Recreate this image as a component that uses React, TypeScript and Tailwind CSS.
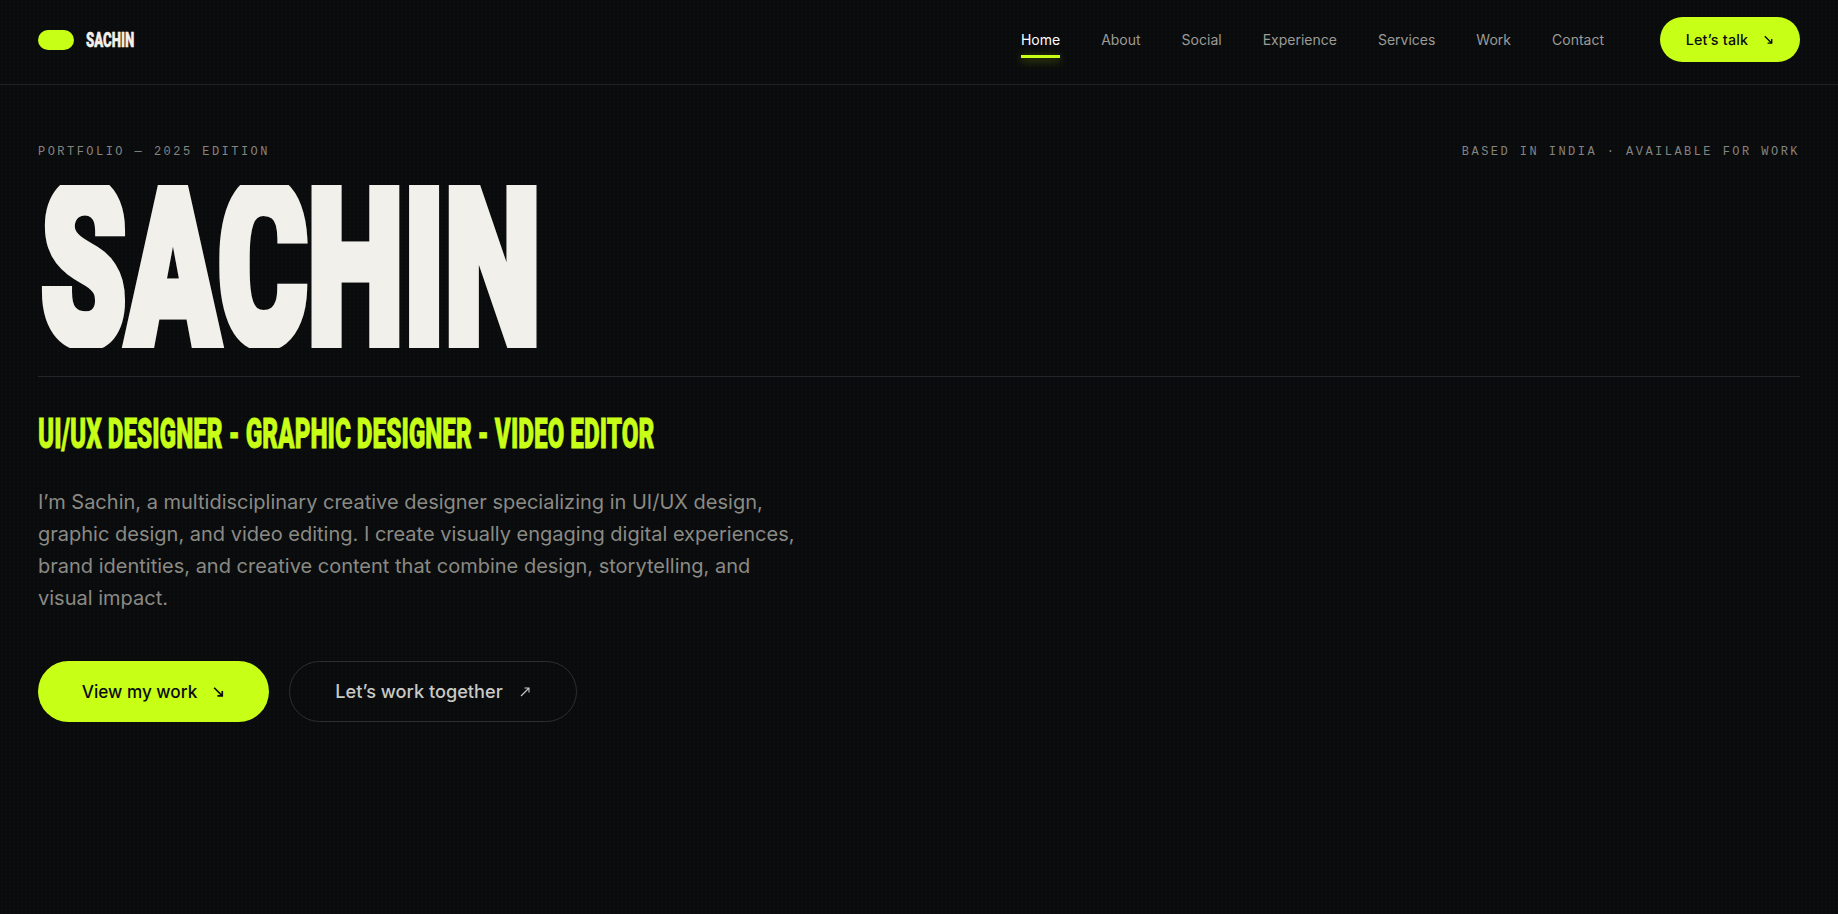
const anton = "font-['Roboto','Liberation_Sans',sans-serif] font-black";
const grotesk = "font-['Inter',sans-serif]";
const mono = "font-['Liberation_Mono',monospace]";

const NAV = [
  { label: "Home", active: true },
  { label: "About" },
  { label: "Social" },
  { label: "Experience" },
  { label: "Services" },
  { label: "Work" },
  { label: "Contact" },
];

function ArrowDown({ className }: { className: string }) {
  return (
    <svg viewBox="0 0 12 12" className={className} fill="none" stroke="currentColor" strokeWidth="1.5">
      <path d="M2 2.5 9.5 10M9.5 5.5V10H5" />
    </svg>
  );
}

function ArrowUp({ className }: { className: string }) {
  return (
    <svg viewBox="0 0 12 12" className={className} fill="none" stroke="currentColor" strokeWidth="1.1">
      <path d="M2 10 10 2M5.5 2H10V6.5" />
    </svg>
  );
}

export default function App() {
  return (
    <div className={`h-[914px] w-full overflow-hidden bg-[#0a0b0c] bg-[radial-gradient(rgba(255,255,255,0.012)_1px,transparent_1px)] bg-[size:4px_4px] ${grotesk}`}>
      <header className="flex h-[85px] items-center justify-between border-b border-[#1f2123] px-[38px] pb-[5px]">
        <div className="flex items-center gap-[12px]">
          <span className="h-[20px] w-[36px] rounded-full bg-[#c8ff16]" />
          <span className={`${anton} inline-block w-[50px] origin-left scale-x-[0.66] text-[20px] whitespace-nowrap text-[#f2f0ea] [-webkit-text-stroke:0.5px_#f2f0ea]`}>
            SACHIN
          </span>
        </div>
        <nav className="flex items-center">
          <ul className="mr-[56px] flex gap-[41px] text-[14px]">
            {NAV.map((n) => (
              <li key={n.label} className="relative">
                <a className={n.active ? "text-white" : "text-[#9b9b97]"}>{n.label}</a>
                {n.active && (
                  <span className="absolute -bottom-[8px] left-0 h-[3px] w-full bg-[#c8ff16] shadow-[0_2px_10px_rgba(200,255,22,0.45)]" />
                )}
              </li>
            ))}
          </ul>
          <a className="flex h-[45px] w-[140px] items-center justify-center gap-[15px] rounded-[23px] bg-[#c8ff16] text-[14.3px] font-medium tracking-[0.015em] text-[#0a0c0e]">
            Let’s talk
            <ArrowDown className="h-[11px] w-[11px]" />
          </a>
        </nav>
      </header>

      <main className="px-[38px]">
        <div className={`${mono} flex items-center justify-between pt-[59px] text-[12px] leading-[16px] tracking-[0.205em] text-[#848481]`}>
          <span>PORTFOLIO — 2025 EDITION</span>
          <span>BASED IN INDIA · AVAILABLE FOR WORK</span>
        </div>

        <div className="mt-[25px] h-[163px] overflow-hidden">
          <h1 className={`${anton} ml-[3px] w-[495px] origin-left scale-x-[0.604] text-[226px] leading-[163px] whitespace-nowrap text-[#f2f0ea] [-webkit-text-stroke:11px_#f2f0ea]`}>
            SACHIN
          </h1>
        </div>

        <div className="mt-[28px] border-t border-[#24262a] pt-[38px]">
          <h2 className={`${anton} h-[36px] w-[615px] origin-left scale-x-[0.565] text-[43px] leading-[36px] whitespace-nowrap text-[#c8ff16] [-webkit-text-stroke:0.8px_#c8ff16]`}>
            UI/UX DESIGNER - GRAPHIC DESIGNER - VIDEO EDITOR
          </h2>
        </div>

        <p className="mt-[35px] w-[770px] text-[20px] leading-[32px] text-[#8a8a85]">
          I’m Sachin, a multidisciplinary creative designer specializing in UI/UX design, graphic design, and video editing. I create visually engaging digital experiences, brand identities, and creative content that combine design, storytelling, and visual impact.
        </p>

        <div className="mt-[47px] flex gap-[20px]">
          <a className="flex h-[61px] w-[231px] items-center justify-center gap-[15px] rounded-full bg-[#c8ff16] text-[17.2px] font-medium text-[#0a0c0e]">
            View my work
            <ArrowDown className="h-[13px] w-[13px]" />
          </a>
          <a className="flex h-[61px] w-[288px] items-center justify-center gap-[16px] rounded-full border border-[#2c2e30] text-[18.2px] font-medium text-[#c9c9c5]">
            Let’s work together
            <ArrowUp className="h-[12px] w-[12px]" />
          </a>
        </div>
      </main>
    </div>
  );
}
